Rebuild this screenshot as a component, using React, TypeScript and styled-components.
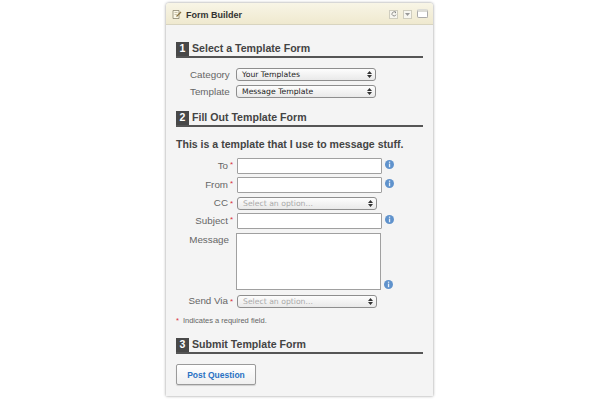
import React from 'react';
import styled, { createGlobalStyle } from 'styled-components';

const GlobalStyle = createGlobalStyle`
  html, body {
    margin: 0;
    height: 400px;
    overflow: hidden;
    background: #fff;
    font-family: "Liberation Sans", Arial, sans-serif;
  }
`;

const Page = styled.div`
  display: flex;
  justify-content: center;
  padding: 3px 1px 0 0;
`;

const Panel = styled.div`
  width: 267px;
  height: 393px;
  box-sizing: border-box;
  background: #f4f4f4;
  border-radius: 3px 3px 0 0;
  box-shadow: 0 0 3px rgba(0, 0, 0, 0.45);
`;

const Header = styled.div`
  display: flex;
  align-items: center;
  height: 19px;
  padding: 2px 5px 0 6px;
  background: linear-gradient(#f8f5e6, #efe9cf);
  border-bottom: 1px solid #d8d4bf;
  border-radius: 3px 3px 0 0;
`;

const HeaderTitle = styled.div`
  flex: 1;
  margin-left: 4px;
  font-size: 9px;
  font-weight: bold;
  color: #333;
`;

const HeaderButton = styled.div`
  display: flex;
  align-items: center;
  justify-content: center;
  width: 7px;
  height: 7px;
  margin: 0 5px 1px 0;
  background: #f7f6f0;
  border: 1px solid #cfcdbf;
`;

const WindowButton = styled.div`
  width: 9px;
  height: 5px;
  margin-bottom: 2px;
  background: #fff;
  border: 1px solid #aaa;
  border-top: 3px solid #dcdcd6;
  border-radius: 2px;
`;

const Body = styled.div`
  padding: 17px 10px 0;
`;

const SectionHead = styled.div<{ $top?: number }>`
  display: flex;
  align-items: stretch;
  height: 14px;
  margin-top: ${({ $top }) => $top ?? 0}px;
  border-bottom: 2px solid #555;
`;

const StepNumber = styled.div`
  width: 13px;
  background: #484848;
  color: #fff;
  font-size: 10.5px;
  font-weight: bold;
  line-height: 12px;
  text-align: center;
`;

const SectionTitle = styled.div`
  margin-left: 3px;
  font-size: 10.6px;
  font-weight: bold;
  line-height: 12px;
  color: #444;
`;

const Row = styled.div<{ $top: number; $height?: number; $align?: string }>`
  display: flex;
  align-items: ${({ $align }) => $align ?? 'center'};
  height: ${({ $height }) => $height ?? 16}px;
  margin-top: ${({ $top }) => $top}px;
`;

const PlainLabel = styled.div`
  width: 60px;
  padding-left: 14px;
  box-sizing: border-box;
  font-size: 9.8px;
  color: #666;
`;

const FieldLabel = styled.div`
  width: 52px;
  margin-bottom: 2px;
  font-size: 9.8px;
  color: #666;
  text-align: right;
  flex-shrink: 0;
`;

const Required = styled.span`
  width: 9px;
  padding-left: 2px;
  box-sizing: border-box;
  align-self: flex-start;
  margin-top: 2px;
  font-size: 8px;
  color: #d8323c;
  flex-shrink: 0;
`;

const Select = styled.div<{ $placeholder?: boolean }>`
  display: flex;
  align-items: center;
  justify-content: space-between;
  width: 140px;
  height: 13px;
  padding: 0 3px 0 5px;
  box-sizing: border-box;
  background: linear-gradient(#fdfdfd, #e9e9e9);
  border: 1px solid #8e8e8e;
  border-radius: 3px;
  font-family: "DejaVu Sans", sans-serif;
  font-size: 7.7px;
  color: ${({ $placeholder }) => ($placeholder ? '#aaa' : '#222')};
`;

const Arrows = styled.span`
  display: flex;
  flex-shrink: 0;
`;

const Input = styled.div`
  width: 145px;
  height: 16px;
  box-sizing: border-box;
  background: #fff;
  border: 1px solid #a0a0a0;
  border-radius: 1px;
`;

const TextArea = styled.div`
  width: 145px;
  height: 57px;
  box-sizing: border-box;
  background: #fff;
  border: 1px solid #a0a0a0;
`;

const MessageLabel = styled.div`
  width: 60px;
  padding: 1px 7px 0 0;
  box-sizing: border-box;
  font-size: 9.8px;
  color: #666;
  text-align: right;
`;

const InfoSlot = styled.div`
  display: flex;
  margin: 0 0 3px 3px;
`;

const BottomSlot = styled.div`
  display: flex;
  align-items: flex-end;
  height: 56px;
  margin-left: 3px;
`;

const Description = styled.div`
  margin-top: 10px;
  font-size: 10.55px;
  font-weight: bold;
  line-height: 14px;
  color: #444;
`;

const Note = styled.div`
  margin-top: 8px;
  font-size: 7.5px;
  line-height: 10px;
  color: #666;
`;

const NoteStar = styled.span`
  margin-right: 4px;
  color: #d8323c;
`;

const PostButton = styled.div`
  display: flex;
  align-items: center;
  justify-content: center;
  width: 80px;
  height: 21px;
  margin-top: 10px;
  box-sizing: border-box;
  background: linear-gradient(#ffffff, #efefef);
  border: 1px solid #9a9a9a;
  border-radius: 2px;
  box-shadow: 0 1px 1px rgba(0, 0, 0, 0.15);
  font-size: 8.5px;
  font-weight: bold;
  color: #2a72c4;
`;

const Updown = () => (
  <Arrows>
    <svg width="5" height="7" viewBox="0 0 5 7">
      <path d="M2.5 0 L5 3 H0 Z M2.5 7 L0 4 H5 Z" fill="#333" />
    </svg>
  </Arrows>
);

const Info = () => (
  <svg width="9" height="9" viewBox="0 0 9 9">
    <circle cx="4.5" cy="4.5" r="4.5" fill="#5f92cc" />
    <rect x="3.9" y="1.6" width="1.3" height="1.2" fill="#e8f0f8" />
    <rect x="3.9" y="3.6" width="1.3" height="3.6" fill="#e8f0f8" />
  </svg>
);

const NoteIcon = () => (
  <svg width="10" height="11" viewBox="0 0 10 11">
    <path d="M1 1.5 H7 V9.5 H1 Z" fill="#fbf8e8" stroke="#8a8570" strokeWidth="0.8" />
    <path d="M2.5 3.5 H5.5 M2.5 5.5 H5" stroke="#b5ae90" strokeWidth="0.7" />
    <path d="M4.5 7.5 L9 3" stroke="#8a7440" strokeWidth="1.2" />
  </svg>
);

const RefreshIcon = () => (
  <svg width="6" height="6" viewBox="0 0 7 7">
    <path d="M5.5 2 A2.4 2.4 0 1 0 5.8 4.2" fill="none" stroke="#777" strokeWidth="0.9" />
    <path d="M4 0.3 L6 0.8 L5.4 2.8 Z" fill="#777" />
  </svg>
);

const DownIcon = () => (
  <svg width="5" height="3" viewBox="0 0 5 3">
    <path d="M0 0 H5 L2.5 3 Z" fill="#999" />
  </svg>
);

export default function App() {
  return (
    <>
      <GlobalStyle />
      <Page>
        <Panel>
          <Header>
            <NoteIcon />
            <HeaderTitle>Form Builder</HeaderTitle>
            <HeaderButton><RefreshIcon /></HeaderButton>
            <HeaderButton><DownIcon /></HeaderButton>
            <WindowButton />
          </Header>
          <Body>
            <SectionHead>
              <StepNumber>1</StepNumber>
              <SectionTitle>Select a Template Form</SectionTitle>
            </SectionHead>
            <Row $top={10} $height={13}>
              <PlainLabel>Category</PlainLabel>
              <Select>Your Templates<Updown /></Select>
            </Row>
            <Row $top={4} $height={13}>
              <PlainLabel>Template</PlainLabel>
              <Select>Message Template<Updown /></Select>
            </Row>
            <SectionHead $top={13}>
              <StepNumber>2</StepNumber>
              <SectionTitle>Fill Out Template Form</SectionTitle>
            </SectionHead>
            <Description>This is a template that I use to message stuff.</Description>
            <Row $top={7}>
              <FieldLabel>To</FieldLabel>
              <Required>*</Required>
              <Input />
              <InfoSlot><Info /></InfoSlot>
            </Row>
            <Row $top={3}>
              <FieldLabel>From</FieldLabel>
              <Required>*</Required>
              <Input />
              <InfoSlot><Info /></InfoSlot>
            </Row>
            <Row $top={4} $height={13}>
              <FieldLabel>CC</FieldLabel>
              <Required>*</Required>
              <Select $placeholder>Select an option...<Updown /></Select>
            </Row>
            <Row $top={3}>
              <FieldLabel>Subject</FieldLabel>
              <Required>*</Required>
              <Input />
              <InfoSlot><Info /></InfoSlot>
            </Row>
            <Row $top={4} $height={57} $align="flex-start">
              <MessageLabel>Message</MessageLabel>
              <TextArea />
              <BottomSlot><Info /></BottomSlot>
            </Row>
            <Row $top={5} $height={13}>
              <FieldLabel>Send Via</FieldLabel>
              <Required>*</Required>
              <Select $placeholder>Select an option...<Updown /></Select>
            </Row>
            <Note><NoteStar>*</NoteStar>Indicates a required field.</Note>
            <SectionHead $top={12}>
              <StepNumber>3</StepNumber>
              <SectionTitle>Submit Template Form</SectionTitle>
            </SectionHead>
            <PostButton>Post Question</PostButton>
          </Body>
        </Panel>
      </Page>
    </>
  );
}
